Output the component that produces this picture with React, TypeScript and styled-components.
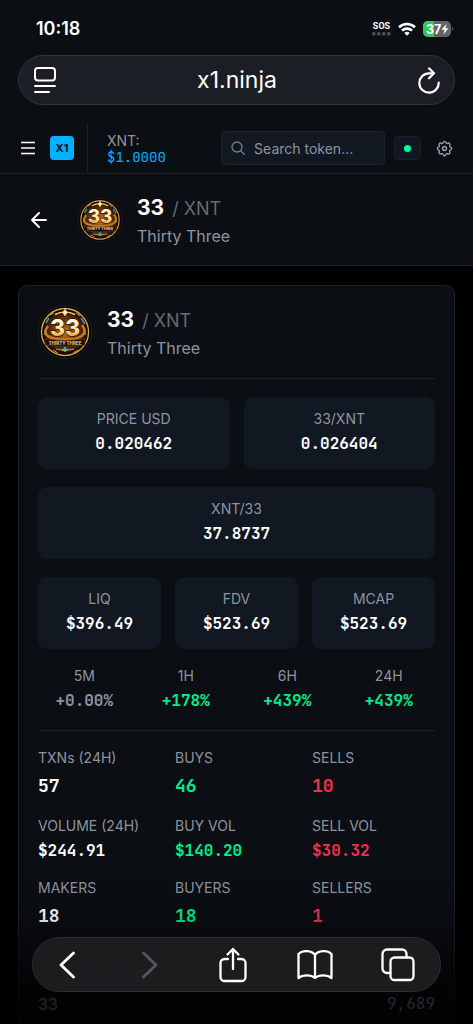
import React from "react";
import styled, { createGlobalStyle } from "styled-components";

const SANS = `Inter, "Liberation Sans", sans-serif`;
const MONO = `"JetBrains Mono", "DejaVu Sans Mono", "Liberation Mono", monospace`;

const color = {
  bar: "#0b0e13",
  card: "#0b0e13",
  tile: "#111822",
  line: "#1c2129",
  text: "#ffffff",
  label: "#8f93a0",
  faint: "#666a74",
  accent: "#00b2ff",
  up: "#00f08c",
  down: "#f5304f",
};

type Tone = "text" | "label" | "up" | "down";

const GlobalStyle = createGlobalStyle`
  *, *::before, *::after { box-sizing: border-box; }
  body { margin: 0; background: #000; color: ${color.text}; font-family: ${SANS}; }
  button, input { font: inherit; color: inherit; }
  h1, h2, p, dl, dt, dd { margin: 0; }
`;

const Screen = styled.div`
  min-height: 100vh;
  display: flex;
  flex-direction: column;
`;

const BrowserTop = styled.header`
  background: ${color.bar};
  padding: 0 18px 18px;
`;

const StatusBar = styled.div`
  height: 55px;
  padding: 2px 1px 0 18px;
  display: flex;
  align-items: center;
  justify-content: space-between;
`;

const Clock = styled.time`
  font-size: 18px;
  line-height: 20px;
  font-weight: 600;
`;

const StatusIcons = styled.div`
  display: flex;
  align-items: center;
  gap: 7px;
`;

const Signal = styled.div`
  display: flex;
  flex-direction: column;
  align-items: center;
  gap: 1px;
  font-family: Roboto, ${SANS};
  font-size: 9px;
  line-height: 10px;
  font-weight: 700;
`;

const AddressBar = styled.div`
  height: 50px;
  padding: 0 11px 0 12px;
  border: 1px solid #303338;
  border-radius: 25px;
  background: #1b1e24;
  display: flex;
  align-items: center;
  justify-content: space-between;
`;

const Host = styled.p`
  font-size: 23px;
  line-height: 28px;
`;

const IconButton = styled.button<{ $w?: number; $h?: number }>`
  width: ${(p) => p.$w ?? 28}px;
  height: ${(p) => p.$h ?? 28}px;
  padding: 0;
  border: 0;
  background: none;
  display: flex;
  align-items: center;
  justify-content: center;
  flex: none;
`;

const SiteBar = styled.nav`
  background: ${color.bar};
  border-bottom: 1px solid ${color.line};
  padding: 0 16px 0 14px;
  height: 51px;
  display: flex;
  align-items: center;
`;

const Brand = styled.a`
  width: 24px;
  height: 24px;
  margin: 0 13px 0 8px;
  border-radius: 4px;
  background: ${color.accent};
  color: #0b0e13;
  font-size: 11px;
  font-weight: 700;
  line-height: 24px;
  text-align: center;
  text-decoration: none;
  flex: none;
`;

const Ticker = styled.div`
  align-self: stretch;
  border-left: 1px solid ${color.line};
  padding: 9px 0 0 19px;
  flex: 1;
  color: ${color.label};
  font-size: 14px;
  line-height: 17px;
`;

const TickerPrice = styled.div`
  color: ${color.accent};
  font-family: ${MONO};
  font-size: 14px;
`;

const Search = styled.label`
  width: 37%;
  height: 34px;
  padding: 0 9px;
  border: 1px solid ${color.line};
  border-radius: 4px;
  background: ${color.tile};
  display: flex;
  align-items: center;
  gap: 9px;
`;

const SearchInput = styled.input`
  min-width: 0;
  flex: 1;
  padding: 0;
  border: 0;
  outline: 0;
  background: none;
  font-size: 14px;
  &::placeholder {
    color: ${color.label};
    opacity: 1;
  }
`;

const StatusButton = styled.button`
  width: 27px;
  height: 24px;
  margin: 0 10px 0 9px;
  padding: 0;
  border: 1px solid ${color.line};
  border-radius: 4px;
  background: ${color.tile};
  display: flex;
  align-items: center;
  justify-content: center;
  flex: none;
  &::before {
    content: "";
    width: 7px;
    height: 7px;
    border-radius: 50%;
    background: #00ff9d;
  }
`;

const TokenBar = styled.section`
  background: ${color.bar};
  border-bottom: 1px solid ${color.line};
  padding: 15px 25px;
  display: flex;
  align-items: center;
  gap: 25px;
`;

const Identity = styled.div`
  display: flex;
  align-items: center;
  gap: 15px;
`;

const IdentityText = styled.div`
  padding-top: 5px;
`;

const TokenTitle = styled.h1`
  height: 28px;
  font-size: 21px;
  line-height: 28px;
  font-weight: 700;
`;

const Quote = styled.span`
  margin-left: 8px;
  color: ${color.faint};
  font-size: 18px;
  font-weight: 400;
`;

const TokenName = styled.p`
  color: ${color.label};
  font-size: 16px;
  line-height: 28px;
`;

const Card = styled.main`
  flex: 1;
  margin: 19px 18px 0;
  padding: 15px 19px 0;
  border: 1px solid ${color.line};
  border-bottom: 0;
  border-radius: 9px 9px 0 0;
  background: ${color.card};
`;

const CardHead = styled.div`
  padding-bottom: 16px;
  border-bottom: 1px solid ${color.line};
`;

const Tiles = styled.dl<{ $cols: number }>`
  margin-top: 18px;
  display: grid;
  grid-template-columns: repeat(${(p) => p.$cols}, 1fr);
  gap: 14px;
`;

const Tile = styled.div`
  height: 72px;
  padding-top: 12px;
  border-radius: 9px;
  background: ${color.tile};
  text-align: center;
`;

const Label = styled.dt`
  color: ${color.label};
  font-size: 14px;
  line-height: 20px;
`;

const Value = styled.dd<{ $tone?: Tone; $large?: boolean }>`
  margin-top: 4px;
  color: ${(p) => color[p.$tone ?? "text"]};
  font-family: ${MONO};
  font-size: ${(p) => (p.$large ? 18 : 16)}px;
  line-height: ${(p) => (p.$large ? 28 : 22)}px;
  font-weight: 600;
`;

const Changes = styled.dl`
  margin-top: 17px;
  padding-bottom: 18px;
  border-bottom: 1px solid ${color.line};
  display: grid;
  grid-template-columns: repeat(4, 1fr);
  gap: 9px;
  text-align: center;
`;

const Stats = styled.dl`
  margin-top: 17px;
  display: grid;
  grid-template-columns: repeat(3, 1fr);
  gap: 16px 14px;
`;

const Reserves = styled.section`
  padding: 37px 0 8px;
`;

const ReservesTitle = styled.h2`
  padding-left: 42px;
  color: #5c5f68;
  font-size: 14px;
  line-height: 20px;
  font-weight: 700;
`;

const ReserveRow = styled.p`
  margin-top: 6px;
  display: flex;
  justify-content: space-between;
  color: ${color.label};
  font-size: 16px;
  line-height: 22px;
`;

const Mono = styled.span`
  font-family: ${MONO};
`;

const BrowserBottom = styled.footer`
  position: fixed;
  inset: auto 0 0;
  padding: 57px 32px 32px;
  background: linear-gradient(
    to bottom,
    rgba(0, 0, 0, 0) 0,
    rgba(0, 0, 0, 0.1) 36px,
    rgba(0, 0, 0, 0.3) 60px,
    rgba(0, 0, 0, 0.72) 110px,
    rgba(0, 0, 0, 0.78) 100%
  );
`;

const Toolbar = styled.div`
  height: 55px;
  padding: 0 22px 0 14px;
  border: 1px solid #2c2e30;
  border-radius: 28px;
  background: rgba(28, 30, 32, 0.94);
  display: flex;
  align-items: center;
  justify-content: space-between;
`;

function Coin({ size }: { size: number }) {
  return (
    <svg width={size} height={size} viewBox="0 0 54 54" role="img" aria-label="Thirty Three logo">
      <defs>
        <radialGradient id={`glow${size}`}>
          <stop offset="0" stopColor="#c4761a" />
          <stop offset="0.55" stopColor="#6a350a" />
          <stop offset="1" stopColor="#120b06" />
        </radialGradient>
        <linearGradient id={`gold${size}`} x1="0" y1="0" x2="0" y2="1">
          <stop offset="0.2" stopColor="#fffbe6" />
          <stop offset="0.6" stopColor="#ffe09a" />
          <stop offset="0.9" stopColor="#e08a1e" />
        </linearGradient>
      </defs>
      <circle cx="27" cy="27" r="26.500" fill="#050506" stroke="#182230" />
      <circle cx="27" cy="27" r="23.500" fill={`url(#glow${size})`} stroke="#e0a545" strokeWidth="1.400" />
      <circle cx="27" cy="27" r="21.400" fill="none" stroke="#140d08" strokeWidth="2" />
      <path d="M12 10l4-2M38 8l4 3M15 45l5 3M35 48l5-3" stroke="#d99a35" />
      <path d="M8 18l3-5M43 13l4 6M7 25v5M47 25v5" stroke="#4a8fb0" strokeWidth="1.600" />
      <path d="M17 9.500q10-5 20 0M27 3v8" fill="none" stroke="#ffc766" strokeWidth="1.500" />
      <circle cx="27" cy="7.500" r="2.200" fill="#fff0bd" />
      <path d="M10 21C3 30 11 34.500 27 34.500s24-5.500 17-14.500" fill="none" stroke="#c97c1c" strokeWidth="2.500" />
      <text
        x="27"
        y="30.500"
        textAnchor="middle"
        fontFamily="Inter, sans-serif"
        fontWeight="800"
        fontSize="23"
        fill={`url(#gold${size})`}
        stroke="#2c1404"
        strokeWidth="1.400"
        paintOrder="stroke"
      >
        33
      </text>
      <path d="M7 34q20 3 40 0v6q-20 3-40 0z" fill="#17110e" stroke="#6b4217" strokeWidth="0.600" />
      <text
        x="27"
        y="39.500"
        textAnchor="middle"
        fontFamily="Inter, sans-serif"
        fontWeight="700"
        fontSize="4.500"
        fill="#e8cf9c"
      >
        THIRTY THREE
      </text>
      <path d="M18 44q9 3 18 0" fill="none" stroke="#d99a35" />
      <path d="M24 44.500h6M27 42v5" stroke="#57b4d8" strokeWidth="1.500" />
    </svg>
  );
}

function Token({ size }: { size: number }) {
  return (
    <Identity>
      <Coin size={size} />
      <IdentityText>
        <TokenTitle>
          33<Quote>/ XNT</Quote>
        </TokenTitle>
        <TokenName>Thirty Three</TokenName>
      </IdentityText>
    </Identity>
  );
}

const stroke = {
  fill: "none",
  stroke: "currentColor",
  strokeLinecap: "round" as const,
  strokeLinejoin: "round" as const,
};

const prices: [string, string][] = [
  ["PRICE USD", "0.020462"],
  ["33/XNT", "0.026404"],
];
const caps: [string, string][] = [
  ["LIQ", "$396.49"],
  ["FDV", "$523.69"],
  ["MCAP", "$523.69"],
];
const changes: [string, string, Tone][] = [
  ["5M", "+0.00%", "label"],
  ["1H", "+178%", "up"],
  ["6H", "+439%", "up"],
  ["24H", "+439%", "up"],
];
const stats: [string, string, Tone, boolean][] = [
  ["TXNs (24H)", "57", "text", true],
  ["BUYS", "46", "up", true],
  ["SELLS", "10", "down", true],
  ["VOLUME (24H)", "$244.91", "text", false],
  ["BUY VOL", "$140.20", "up", false],
  ["SELL VOL", "$30.32", "down", false],
  ["MAKERS", "18", "text", true],
  ["BUYERS", "18", "up", true],
  ["SELLERS", "1", "down", true],
];

function TileRow({ items }: { items: [string, string][] }) {
  return (
    <Tiles $cols={items.length}>
      {items.map(([label, value]) => (
        <Tile key={label}>
          <Label>{label}</Label>
          <Value>{value}</Value>
        </Tile>
      ))}
    </Tiles>
  );
}

export default function App() {
  return (
    <Screen>
      <GlobalStyle />
      <BrowserTop>
        <StatusBar>
          <Clock>10:18</Clock>
          <StatusIcons>
            <Signal>
              SOS
              <svg width="19" height="4" viewBox="0 0 19 4" fill="#4b4d51">
                <rect width="3.500" height="3.500" rx="1.200" />
                <rect x="5" width="3.500" height="3.500" rx="1.200" />
                <rect x="10" width="3.500" height="3.500" rx="1.200" />
                <rect x="15" width="3.500" height="3.500" rx="1.200" />
              </svg>
            </Signal>
            <svg width="18" height="14" viewBox="0 0 18 14" fill="none" stroke="#fff" strokeWidth="2.600">
              <path d="M1 5.200a11.500 11.500 0 0 1 16 0" />
              <path d="M4 8.600a7.200 7.200 0 0 1 10 0" />
              <path d="M9 13.800L6.300 11a3.900 3.900 0 0 1 5.400 0z" fill="#fff" stroke="none" />
            </svg>
            <svg width="31" height="16" viewBox="0 0 31 16">
              <rect width="28" height="16" rx="5" fill="#636569" />
              <path d="M5 0h6v16H5a5 5 0 0 1-5-5V5a5 5 0 0 1 5-5z" fill="#34c759" />
              <path d="M29 5.500q2 2.500 0 5z" fill="#636569" />
              <text x="3" y="12.500" fontFamily="Inter, sans-serif" fontWeight="700" fontSize="12.500" fill="#fff">
                37
              </text>
              <path d="M23.500 3l-5 5.800h3l-1 4.400 5-5.900h-3z" fill="#fff" />
            </svg>
          </StatusIcons>
        </StatusBar>
        <AddressBar>
          <IconButton aria-label="Page menu">
            <svg width="22" height="26" viewBox="0 0 22 26" strokeWidth="2" {...stroke}>
              <rect x="1" y="1" width="20" height="12.500" rx="3" />
              <path d="M1 19h20M1 25h14" />
            </svg>
          </IconButton>
          <Host>x1.ninja</Host>
          <IconButton aria-label="Reload">
            <svg width="22" height="27" viewBox="0 0 22 27" strokeWidth="2.200" {...stroke}>
              <path d="M20.700 15.500a9.700 9.700 0 1 1-9.700-9.200h4.300" />
              <path d="M11 1.300l5 5-5 5" />
            </svg>
          </IconButton>
        </AddressBar>
      </BrowserTop>

      <SiteBar>
        <IconButton aria-label="Menu">
          <svg width="16" height="14" viewBox="0 0 16 14" fill="none" stroke="#fff" strokeWidth="1.500">
            <path d="M1 1.500h14M1 7h14M1 12.500h14" />
          </svg>
        </IconButton>
        <Brand href="#">X1</Brand>
        <Ticker>
          XNT:
          <TickerPrice>$1.0000</TickerPrice>
        </Ticker>
        <Search>
          <svg width="14" height="14" viewBox="0 0 14 14" {...stroke} stroke="#777b85" strokeWidth="1.300">
            <circle cx="6" cy="6" r="5" />
            <path d="M9.700 9.700l3.500 3.500" />
          </svg>
          <SearchInput type="search" aria-label="Search token" placeholder="Search token..." />
        </Search>
        <StatusButton aria-label="Connection status" />
        <IconButton $w={26} aria-label="Settings">
          <svg width="19" height="19" viewBox="0 0 24 24" {...stroke} stroke="#9a9da8" strokeWidth="1.800">
            <path d="M10.300 4.300c.4-1.700 3-1.700 3.400 0a1.700 1.700 0 0 0 2.600 1.100c1.500-.9 3.300.8 2.400 2.400a1.700 1.700 0 0 0 1 2.500c1.800.4 1.800 3 0 3.400a1.700 1.700 0 0 0-1 2.600c.9 1.500-.9 3.300-2.400 2.400a1.700 1.700 0 0 0-2.600 1c-.4 1.800-3 1.800-3.400 0a1.700 1.700 0 0 0-2.600-1c-1.500.9-3.300-.9-2.400-2.400a1.700 1.700 0 0 0-1-2.600c-1.800-.4-1.800-3 0-3.400a1.700 1.700 0 0 0 1-2.500c-.9-1.600.9-3.300 2.400-2.400 1 .6 2.300.1 2.600-1.100z" />
            <circle cx="12" cy="12" r="2.500" />
          </svg>
        </IconButton>
      </SiteBar>

      <TokenBar>
        <IconButton aria-label="Back to list">
          <svg width="16" height="16" viewBox="0 0 16 16" strokeWidth="1.900" {...stroke}>
            <path d="M15 8H1M8 1L1 8l7 7" />
          </svg>
        </IconButton>
        <Token size={44} />
      </TokenBar>

      <Card>
        <CardHead>
          <Token size={54} />
        </CardHead>
        <TileRow items={prices} />
        <TileRow items={[["XNT/33", "37.8737"]]} />
        <TileRow items={caps} />
        <Changes>
          {changes.map(([label, value, tone]) => (
            <div key={label}>
              <Label>{label}</Label>
              <Value $tone={tone}>{value}</Value>
            </div>
          ))}
        </Changes>
        <Stats>
          {stats.map(([label, value, tone, large]) => (
            <div key={label}>
              <Label>{label}</Label>
              <Value $tone={tone} $large={large}>
                {value}
              </Value>
            </div>
          ))}
        </Stats>
        <Reserves>
          <ReservesTitle>RESERVES</ReservesTitle>
          <ReserveRow>
            <span>33</span>
            <Mono>9,689</Mono>
          </ReserveRow>
        </Reserves>
      </Card>

      <BrowserBottom>
        <Toolbar>
          <IconButton $w={40} $h={40} aria-label="Back">
            <svg width="16" height="28" viewBox="0 0 16 28" strokeWidth="2.800" {...stroke}>
              <path d="M14.500 2L2 14l12.500 12" />
            </svg>
          </IconButton>
          <IconButton $w={40} $h={40} aria-label="Forward">
            <svg width="16" height="28" viewBox="0 0 16 28" strokeWidth="2.800" {...stroke} stroke="#56585b">
              <path d="M1.500 2L14 14 1.500 26" />
            </svg>
          </IconButton>
          <IconButton $w={40} $h={40} aria-label="Share">
            <svg width="28" height="36" viewBox="0 0 28 36" strokeWidth="2.300" {...stroke}>
              <path d="M9 12H5.500a4 4 0 0 0-4 4v14a4 4 0 0 0 4 4h17a4 4 0 0 0 4-4V16a4 4 0 0 0-4-4H19" />
              <path d="M14 22V2M8.500 7.500L14 2l5.500 5.500" />
            </svg>
          </IconButton>
          <IconButton $w={40} $h={40} aria-label="Bookmarks">
            <svg width="36" height="30" viewBox="0 0 36 30" strokeWidth="2.300" {...stroke}>
              <path d="M18 5C14.500 0 5 0 1.500 4v24C6 24.500 14 24.500 18 28c4-3.500 12-3.500 16.500 0V4C31 0 21.500 0 18 5zM18 5v23" />
            </svg>
          </IconButton>
          <IconButton $w={40} $h={40} aria-label="Tabs">
            <svg width="34" height="34" viewBox="0 0 34 34" strokeWidth="2.300" {...stroke}>
              <rect x="9.500" y="9.500" width="23" height="22.500" rx="4" />
              <path d="M9.500 25H6a4.500 4.500 0 0 1-4.500-4.500V6A4.500 4.500 0 0 1 6 1.500h15A4.500 4.500 0 0 1 25.500 6v3.500" />
            </svg>
          </IconButton>
        </Toolbar>
      </BrowserBottom>
    </Screen>
  );
}
